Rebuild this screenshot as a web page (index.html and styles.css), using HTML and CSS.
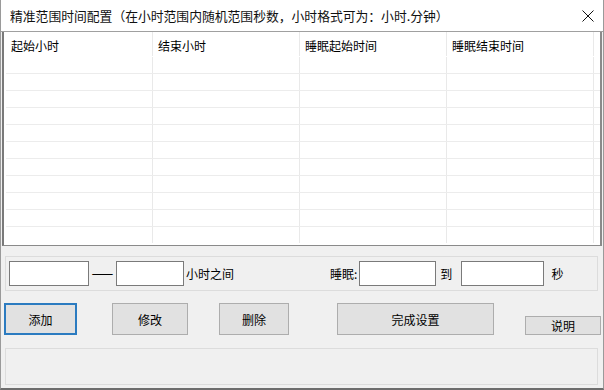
FILE: index.html
```html
<!DOCTYPE html>
<html lang="zh-CN">
<head>
  <meta charset="UTF-8">
  <title>精准范围时间配置</title>
  <link rel="stylesheet" href="styles.css">
</head>
<body>

<div class="window">
  <div class="titlebar">
    <span class="title">精准范围时间配置（在小时范围内随机范围秒数，小时格式可为：小时.分钟）</span>
    <svg class="close" width="12" height="12" viewBox="0 0 12 12">
      <path d="M0.5 0.5 L11.5 11.5 M11.5 0.5 L0.5 11.5" stroke="#111" stroke-width="1" fill="none"/>
    </svg>
  </div>

  <div class="content">
    <div class="list">
      <div class="list-head">
        <div class="cell">起始小时</div>
        <div class="cell">结束小时</div>
        <div class="cell">睡眠起始时间</div>
        <div class="cell">睡眠结束时间</div>
        <div class="cell last"></div>
      </div>
      <div class="list-body" id="rows"></div>
    </div>

    <div class="group range">
      <input type="text" class="txt t1">
      <span class="dash">—</span>
      <input type="text" class="txt t2">
      <span class="lbl">小时之间</span>
      <span class="lbl sleep">睡眠:</span>
      <input type="text" class="txt t3">
      <span class="lbl to">到</span>
      <input type="text" class="txt t4">
      <span class="lbl sec">秒</span>
    </div>

    <div class="buttons">
      <button class="btn default b-add">添加</button>
      <button class="btn b-edit">修改</button>
      <button class="btn b-del">删除</button>
      <button class="btn b-done">完成设置</button>
      <button class="btn small b-help">说明</button>
    </div>

    <div class="group status"></div>
  </div>
</div>

<script>
  // empty grid lines of the list view
  const rows = document.getElementById('rows');
  for (let i = 0; i < 11; i++) {
    const r = document.createElement('div');
    r.className = 'row';
    r.innerHTML = '<div class="cell"></div><div class="cell"></div><div class="cell"></div><div class="cell"></div><div class="cell last"></div>';
    rows.appendChild(r);
  }
</script>

</body>
</html>
```

FILE: styles.css
```css
body { margin: 0; background: #f0f0f0; font-family: "Noto Sans CJK SC", "Microsoft YaHei", sans-serif; font-size: 12px; color: #000; }

.window { width: 604px; height: 390px; box-sizing: border-box; border: 1px solid #9a9a9a; border-bottom: 2px solid #6d6d6d; border-top: 0; background: #f0f0f0; display: flex; flex-direction: column; overflow: hidden; }

.titlebar { height: 32px; box-sizing: border-box; background: #fff; border-bottom: 1px solid #a0a0a0; display: flex; align-items: center; padding: 0 9px 0 9px; }
.title { flex: 1; font-size: 12.8px; line-height: 16px; white-space: nowrap; color: #111; }

.content { padding: 0 1px 0 1px; display: flex; flex-direction: column; }

.list { height: 214px; box-sizing: border-box; background: #fff; border-left: 2px solid #7a7a7a; border-right: 2px solid #8a8a8a; border-bottom: 1px solid #8a8a8a; padding-left: 2px; overflow: hidden; }
.list-head { display: flex; height: 24px; }
.list-head .cell { line-height: 24px; padding: 2px 0 0 5px; }
.cell { width: 147px; box-sizing: border-box; border-right: 1px solid #e9e9e9; flex: none; }
.cell.last { width: 10px; border-right: 0; }
.row { display: flex; height: 17px; box-sizing: border-box; border-top: 1px solid #ececec; }
.row:first-child { border-top-color: #fff; }

.group { border: 1px solid #dcdcdc; margin: 0 4px 0 3px; }
.range { margin-top: 10px; height: 35px; box-sizing: border-box; display: flex; align-items: center; padding-left: 3px; }
.txt { height: 25px; box-sizing: border-box; border: 1px solid #7a7a7a; background: #fff; margin: 0; padding: 0; font: inherit; }
.t1 { width: 80px; }
.dash { width: 27px; text-align: center; font-family: "Liberation Sans", sans-serif; font-size: 12px; transform: scaleX(1.7); }
.t2 { width: 68px; }
.lbl { margin-left: 2px; }
.sleep { margin-left: 96px; }
.t3 { width: 77px; margin-left: 2px; }
.to { margin-left: 4px; margin-right: 9px; }
.t4 { width: 83px; }
.sec { margin-left: 7px; }

.buttons { display: flex; align-items: flex-end; height: 44px; }
.btn { height: 32px; box-sizing: border-box; background: #e1e1e1; border: 1px solid #adadad; font: inherit; padding: 0; color: #000; }
.btn.default { border: 2px solid #2b7bc0; }
.b-add { width: 73px; margin-left: 2px; }
.b-edit { width: 76px; margin-left: 35px; }
.b-del { width: 70px; margin-left: 31px; }
.b-done { width: 157px; margin-left: 48px; }
.b-help { width: 76px; height: 19px; margin-left: 31px; }

.status { margin-top: 13px; height: 37px; box-sizing: border-box; }
```
